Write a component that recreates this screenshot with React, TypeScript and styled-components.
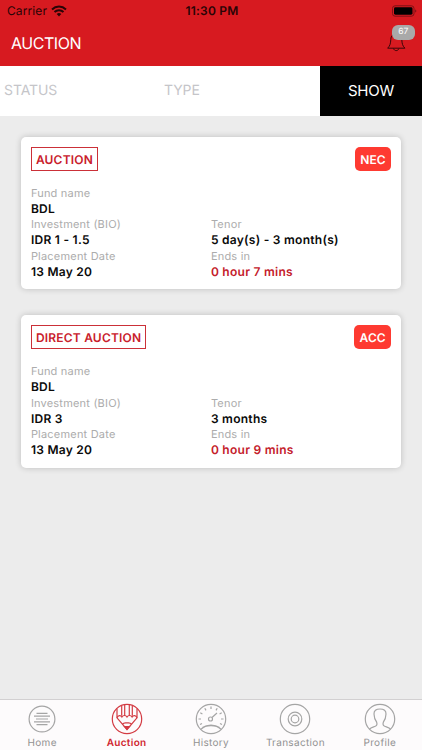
import React from "react";
import styled, { createGlobalStyle } from "styled-components";

const GlobalStyle = createGlobalStyle`
  * { box-sizing: border-box; }
  body { margin: 0; background: #ececec; }
`;

const Screen = styled.div`
  width: 422px;
  height: 750px;
  display: flex;
  flex-direction: column;
  overflow: hidden;
  background: #ececec;
  font-family: Inter, "Liberation Sans", sans-serif;
  text-rendering: geometricPrecision;
`;

const Header = styled.header`
  height: 65.5px;
  flex: none;
  background: #d71a20;
`;

const StatusBar = styled.div`
  height: 22px;
  padding: 0 5px 0 7px;
  display: grid;
  grid-template-columns: 1fr auto 1fr;
  align-items: center;
  color: #2a0406;
`;

const Carrier = styled.div`
  display: flex;
  align-items: center;
  gap: 4px;
  font-size: 12px;
  line-height: 22px;
  letter-spacing: 0.1px;
`;

const Clock = styled.div`
  font-size: 12px;
  font-weight: 600;
  line-height: 22px;
  letter-spacing: 0.2px;
`;

const Battery = styled.div`
  justify-self: end;
  display: flex;
`;

const TitleBar = styled.div`
  height: 43px;
  padding: 0 14px 0 11px;
  display: flex;
  align-items: center;
  justify-content: space-between;
`;

const Title = styled.h1`
  margin: 0;
  color: #fff;
  font-size: 16px;
  font-weight: 400;
  line-height: 43px;
  letter-spacing: -0.45px;
`;

const Bell = styled.div`
  position: relative;
  width: 22px;
  height: 22px;
  margin-top: -4px;
`;

const Count = styled.span`
  position: absolute;
  left: 6px;
  top: -6px;
  width: 22.5px;
  height: 15px;
  border-radius: 6px;
  background: #a9a9a9;
  color: #fff;
  font-size: 8.5px;
  line-height: 15.5px;
  text-align: center;
`;

const Filters = styled.div`
  height: 50.8px;
  flex: none;
  display: grid;
  grid-template-columns: 160px 160px 1fr;
  background: #fff;
`;

const Filter = styled.div`
  padding-left: 4px;
  color: #c5c5c9;
  font-size: 14px;
  line-height: 50px;
  letter-spacing: -0.1px;
`;

const ShowButton = styled.button`
  border: 0;
  padding: 0;
  background: #000;
  color: #fff;
  font: inherit;
  font-size: 15px;
  line-height: 50px;
  letter-spacing: -0.2px;
`;

const List = styled.main`
  flex: 1;
  padding: 20.3px 20.6px 0;
  display: flex;
  flex-direction: column;
  gap: 25.4px;
`;

const Card = styled.article`
  height: 152.9px;
  padding: 10px 10.3px;
  border-radius: 5px;
  background: #fff;
  box-shadow: 0 0 6px rgba(0, 0, 0, 0.2);
`;

const CardTop = styled.div`
  height: 24.5px;
  display: flex;
  justify-content: space-between;
`;

const Tag = styled.span`
  height: 24.5px;
  padding: 0 4px;
  border: 1.5px solid #cb3038;
  color: #c9202b;
  font-size: 12px;
  font-weight: 600;
  line-height: 23px;
  letter-spacing: 0.2px;
`;

const Badge = styled.span`
  height: 24.5px;
  padding: 0 5.3px;
  border-radius: 5px;
  background: #fe3a31;
  color: #fff;
  font-size: 12px;
  font-weight: 600;
  line-height: 25px;
  letter-spacing: 0.1px;
`;

const Fields = styled.dl`
  margin: 13.9px 0 0;
  display: grid;
  grid-template-columns: 180px 1fr;
  grid-auto-rows: 31.5px;
`;

const Field = styled.div<{ $wide?: boolean }>`
  grid-column: ${(p) => (p.$wide ? "1 / -1" : "auto")};
`;

const Label = styled.dt`
  color: #acacac;
  font-size: 11px;
  line-height: 16px;
  letter-spacing: 0.2px;
`;

const Value = styled.dd<{ $urgent?: boolean }>`
  margin: 0;
  color: ${(p) => (p.$urgent ? "#c4202b" : "#0a0a0a")};
  font-size: 12px;
  font-weight: 600;
  line-height: 15px;
  letter-spacing: 0.27px;
`;

const TabBar = styled.nav`
  height: 51px;
  flex: none;
  display: grid;
  grid-template-columns: repeat(5, 1fr);
  border-top: 1px solid #d2d0d1;
  background: #fdfbfc;
`;

const Tab = styled.a<{ $active?: boolean }>`
  padding-top: 3px;
  display: flex;
  flex-direction: column;
  align-items: center;
  gap: 1px;
  color: ${(p) => (p.$active ? "#d0252e" : "#929292")};
  font-size: 10px;
  font-weight: ${(p) => (p.$active ? 600 : 400)};
  line-height: 14px;
  letter-spacing: 0.33px;

  svg {
    color: ${(p) => (p.$active ? "#d33b43" : "#a5a5a5")};
  }
`;

const WifiIcon = () => (
  <svg width="16" height="12" viewBox="0 0 16 12" fill="none" stroke="#2a0406" strokeWidth="2">
    <path d="M1 4.4a10.2 10.2 0 0 1 14 0" />
    <path d="M3.5 7a6.5 6.5 0 0 1 9 0" />
    <path d="M8 11.5 5.7 9.1a3.3 3.3 0 0 1 4.6 0Z" fill="#2a0406" stroke="none" />
  </svg>
);

const BatteryIcon = () => (
  <svg width="25" height="12" viewBox="0 0 25 12">
    <rect x=".5" y=".8" width="21.5" height="10.4" rx="2.6" fill="none" stroke="#7d1115" />
    <rect x="2" y="2.3" width="18.5" height="7.4" rx="1.4" fill="#000" />
    <path d="M23.2 4.5v3c1.5-.4 1.5-2.6 0-3Z" fill="#7d1115" />
  </svg>
);

const BellIcon = () => (
  <svg width="22" height="22" viewBox="0 0 22 22" fill="none" stroke="#3a0608" strokeLinejoin="round">
    <path d="M1.700 17.200c2.500-2.600 2.800-4.700 3.100-8.700C5 4.500 7 3 10.200 3s5.400 1.500 5.600 5.500c.2 4 .6 6.100 3.100 8.700Z" />
    <path d="M7.500 17.500c.8 2.800 4.600 2.800 5.400 0" />
  </svg>
);

const icons: Record<string, React.ReactNode> = {
  Home: (
    <>
      <circle cx="16" cy="16" r="12.900" />
      <path d="M10.500 10.300h11M8 13.100h16M10 16h12M8 18.900h16M10.500 21.700h11" />
    </>
  ),
  Auction: (
    <>
      <circle cx="16" cy="16" r="14.700" />
      <path d="M6 5.500v9.300L16 26.500l10-11.700V5.500M10.700 3v9.800M13.700 1.500v11.500M18.300 1.500v11.500M21.300 3v9.800" />
      <path d="M6 14.800c1-2.700 3.800-2.700 4.900-.8 1.100-2 4-2 5.100 0 1.100-2 4-2 5.100 0 1.100-1.900 3.900-1.900 4.900.8" />
      <path d="M11.500 21.200c1.400-2 3-1.300 4.500-1.300s3.100-.7 4.500 1.300" />
      <path d="m13.600 23.500 2.400 2.800 2.400-2.800Z" fill="currentColor" />
    </>
  ),
  History: (
    <>
      <circle cx="16" cy="16" r="14.700" />
      <circle cx="15.500" cy="16" r="2" />
      <path d="m17 14.500 5-4.500M6 26.300c5-4.800 15-4.800 20 0M7.500 24.500c4.500-3.300 12.500-3.300 17 0" />
      <path d="M16 3.500v2.500M9.800 5.200l1.200 2.200M22.200 5.200 21 7.400M5.300 9.700l2.100 1.200M26.700 9.700l-2.100 1.200M3.500 16H6M28.500 16H26M5 21.500l2-1M27 21.500l-2-1" />
    </>
  ),
  Transaction: (
    <>
      <circle cx="16" cy="16" r="14.700" />
      <circle cx="16" cy="16" r="6.800" />
      <circle cx="16" cy="16" r="3.800" />
    </>
  ),
  Profile: (
    <>
      <circle cx="16" cy="16" r="14.700" />
      <path d="M5.500 26.200c1.200-1.600 3.500-2 5.800-2.900 1.700-.7 2-2.300 1.300-4.300-1.700-2-2.500-4.700-2.600-8C9.900 7.700 12 6 16 6s6.100 1.700 6 5c-.1 3.300-.9 6-2.600 8-.7 2-.4 3.600 1.300 4.300 2.300.9 4.600 1.300 5.800 2.900" />
    </>
  ),
};

interface Auction {
  kind: string;
  status: string;
  investment: string;
  tenor: string;
  ends: string;
}

const auctions: Auction[] = [
  { kind: "AUCTION", status: "NEC", investment: "IDR 1 - 1.5", tenor: "5 day(s) - 3 month(s)", ends: "0 hour 7 mins" },
  { kind: "DIRECT AUCTION", status: "ACC", investment: "IDR 3", tenor: "3 months", ends: "0 hour 9 mins" },
];

const AuctionCard = ({ item }: { item: Auction }) => (
  <Card>
    <CardTop>
      <Tag>{item.kind}</Tag>
      <Badge>{item.status}</Badge>
    </CardTop>
    <Fields>
      <Field $wide><Label>Fund name</Label><Value>BDL</Value></Field>
      <Field><Label>Investment (BIO)</Label><Value>{item.investment}</Value></Field>
      <Field><Label>Tenor</Label><Value>{item.tenor}</Value></Field>
      <Field><Label>Placement Date</Label><Value>13 May 20</Value></Field>
      <Field><Label>Ends in</Label><Value $urgent>{item.ends}</Value></Field>
    </Fields>
  </Card>
);

export default function App() {
  return (
    <Screen>
      <GlobalStyle />
      <Header>
        <StatusBar>
          <Carrier>Carrier <WifiIcon /></Carrier>
          <Clock>11:30 PM</Clock>
          <Battery><BatteryIcon /></Battery>
        </StatusBar>
        <TitleBar>
          <Title>AUCTION</Title>
          <Bell><BellIcon /><Count>67</Count></Bell>
        </TitleBar>
      </Header>
      <Filters>
        <Filter>STATUS</Filter>
        <Filter>TYPE</Filter>
        <ShowButton>SHOW</ShowButton>
      </Filters>
      <List>
        {auctions.map((item) => <AuctionCard key={item.kind} item={item} />)}
      </List>
      <TabBar>
        {Object.keys(icons).map((name) => (
          <Tab key={name} $active={name === "Auction"}>
            <svg width="32" height="32" viewBox="0 0 32 32" fill="none" stroke="currentColor" strokeWidth="1.2">
              {icons[name]}
            </svg>
            {name}
          </Tab>
        ))}
      </TabBar>
    </Screen>
  );
}
